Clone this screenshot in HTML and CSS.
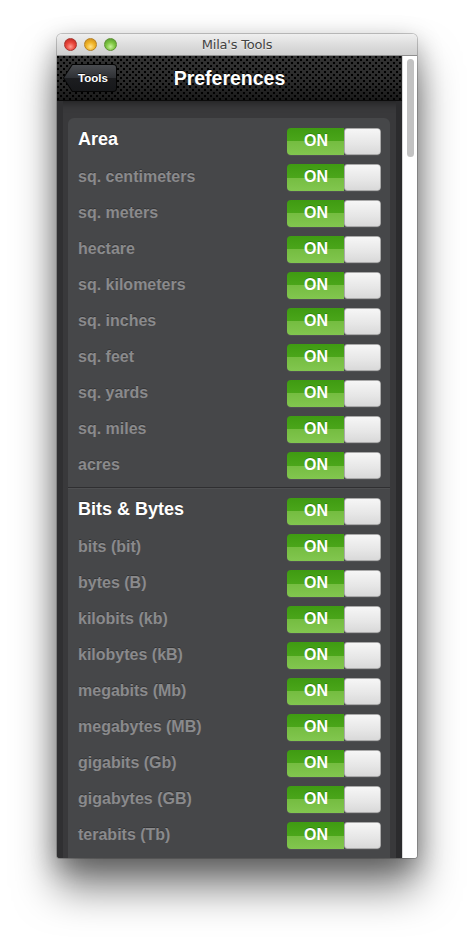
FILE: index.html
```html
<!DOCTYPE html>
<html>
<head>
<meta charset="utf-8">
<link rel="stylesheet" href="styles.css">
</head>
<body>
<div class="stage">
  <div class="window">
    <div class="titlebar">
      <div class="lights">
        <span class="light red"></span>
        <span class="light yellow"></span>
        <span class="light green"></span>
      </div>
      <div class="wtitle">Mila's Tools</div>
    </div>
    <div class="main">
      <div class="app">
        <div class="nav">
          <div class="nav-left">
            <div class="back"><div class="back-inner">Tools</div></div>
          </div>
          <div class="nav-title">Preferences</div>
          <div class="nav-right"></div>
        </div>
        <div class="content">
          <div class="panel">
            <div class="section">
              <div class="row head"><span class="label">Area</span><span class="toggle"><span class="on">ON</span><span class="knob"></span></span></div>
              <div class="row"><span class="label">sq. centimeters</span><span class="toggle"><span class="on">ON</span><span class="knob"></span></span></div>
              <div class="row"><span class="label">sq. meters</span><span class="toggle"><span class="on">ON</span><span class="knob"></span></span></div>
              <div class="row"><span class="label">hectare</span><span class="toggle"><span class="on">ON</span><span class="knob"></span></span></div>
              <div class="row"><span class="label">sq. kilometers</span><span class="toggle"><span class="on">ON</span><span class="knob"></span></span></div>
              <div class="row"><span class="label">sq. inches</span><span class="toggle"><span class="on">ON</span><span class="knob"></span></span></div>
              <div class="row"><span class="label">sq. feet</span><span class="toggle"><span class="on">ON</span><span class="knob"></span></span></div>
              <div class="row"><span class="label">sq. yards</span><span class="toggle"><span class="on">ON</span><span class="knob"></span></span></div>
              <div class="row"><span class="label">sq. miles</span><span class="toggle"><span class="on">ON</span><span class="knob"></span></span></div>
              <div class="row"><span class="label">acres</span><span class="toggle"><span class="on">ON</span><span class="knob"></span></span></div>
            </div>
            <div class="section">
              <div class="row head"><span class="label">Bits &amp; Bytes</span><span class="toggle"><span class="on">ON</span><span class="knob"></span></span></div>
              <div class="row"><span class="label">bits (bit)</span><span class="toggle"><span class="on">ON</span><span class="knob"></span></span></div>
              <div class="row"><span class="label">bytes (B)</span><span class="toggle"><span class="on">ON</span><span class="knob"></span></span></div>
              <div class="row"><span class="label">kilobits (kb)</span><span class="toggle"><span class="on">ON</span><span class="knob"></span></span></div>
              <div class="row"><span class="label">kilobytes (kB)</span><span class="toggle"><span class="on">ON</span><span class="knob"></span></span></div>
              <div class="row"><span class="label">megabits (Mb)</span><span class="toggle"><span class="on">ON</span><span class="knob"></span></span></div>
              <div class="row"><span class="label">megabytes (MB)</span><span class="toggle"><span class="on">ON</span><span class="knob"></span></span></div>
              <div class="row"><span class="label">gigabits (Gb)</span><span class="toggle"><span class="on">ON</span><span class="knob"></span></span></div>
              <div class="row"><span class="label">gigabytes (GB)</span><span class="toggle"><span class="on">ON</span><span class="knob"></span></span></div>
              <div class="row"><span class="label">terabits (Tb)</span><span class="toggle"><span class="on">ON</span><span class="knob"></span></span></div>
              <div class="row"><span class="label">terabytes (TB)</span><span class="toggle"><span class="on">ON</span><span class="knob"></span></span></div>
            </div>
          </div>
        </div>
      </div>
      <div class="scroll"><div class="thumb"></div></div>
    </div>
  </div>
</div>
</body>
</html>
```
FILE: styles.css
```css
html, body {
  margin: 0;
  padding: 0;
  background: #ffffff;
}
.stage {
  padding: 34px 0 0 57px;
  height: 937px;
  box-sizing: border-box;
  overflow: hidden;
}
.window {
  width: 360px;
  height: 824px;
  display: flex;
  flex-direction: column;
  border-radius: 5px 5px 3px 3px;
  overflow: hidden;
  box-shadow: 0 30px 42px rgba(0,0,0,0.5), 0 8px 26px rgba(0,0,0,0.3), 0 0 0 1px rgba(0,0,0,0.2);
  font-family: "Liberation Sans", Arial, sans-serif;
}
.titlebar {
  height: 22px;
  flex: none;
  display: grid;
  grid-template-columns: 1fr auto 1fr;
  align-items: center;
  background: linear-gradient(#efefef, #dadada 60%, #cfcfcf);
  box-sizing: border-box;
  border-bottom: 1px solid #8f8f8f;
}
.lights {
  display: flex;
  gap: 7px;
  padding-left: 7px;
}
.light {
  width: 13px;
  height: 13px;
  border-radius: 50%;
  box-sizing: border-box;
}
.red {
  background: radial-gradient(circle at 50% 70%, #ff9a8e 0, #e9463c 45%, #b9211a 100%);
  border: 1px solid #a5352e;
}
.yellow {
  background: radial-gradient(circle at 50% 70%, #ffe28a 0, #f0b427 45%, #c5861a 100%);
  border: 1px solid #b58124;
}
.green {
  background: radial-gradient(circle at 50% 70%, #c6f09a 0, #7fc642 45%, #4c912c 100%);
  border: 1px solid #5f9134;
}
.wtitle {
  font-family: "DejaVu Sans", "Liberation Sans", sans-serif;
  font-size: 13px;
  color: #434343;
  letter-spacing: -0.2px;
  text-shadow: 0 1px 0 rgba(255,255,255,0.6);
}
.main {
  flex: 1;
  display: flex;
  min-height: 0;
}
.app {
  width: 345px;
  flex: none;
  display: flex;
  flex-direction: column;
  background: #38383a;
}
.nav {
  height: 45px;
  flex: none;
  display: grid;
  grid-template-columns: 1fr auto 1fr;
  align-items: center;
  background:
    radial-gradient(circle, #000 1px, transparent 1.6px) 1px 1px / 6px 6px,
    radial-gradient(circle, #000 1px, transparent 1.6px) 4px 4px / 6px 6px,
    linear-gradient(#333333, #2a2a2a 60%, #1a1a1a);
  box-sizing: border-box;
  border-bottom: 1px solid #0b0b0b;
}
.nav-left {
  padding-left: 6px;
  display: flex;
}
.back {
  width: 54px;
  height: 28px;
  background: #050505;
  clip-path: polygon(0 50%, 9px 0, 100% 0, 100% 100%, 9px 100%);
  border-radius: 0 4px 4px 0;
  padding: 1px;
  box-sizing: border-box;
}
.back-inner {
  height: 100%;
  clip-path: polygon(0 50%, 8.6px 0, 100% 0, 100% 100%, 8.6px 100%);
  border-radius: 0 3px 3px 0;
  background: linear-gradient(#4a4c50, #2e3034 50%, #1c1d20 51%, #17181a);
  color: #fff;
  font-weight: bold;
  font-size: 11.5px;
  display: flex;
  align-items: center;
  justify-content: center;
  padding-left: 6px;
  box-sizing: border-box;
  text-shadow: 0 -1px 0 rgba(0,0,0,0.7);
}
.nav-title {
  color: #fff;
  font-weight: bold;
  font-size: 19.5px;
  text-shadow: 0 -1px 0 rgba(0,0,0,0.8);
}
.content {
  flex: 1;
  overflow: hidden;
  padding: 17px 12px 0 11px;
  background: #39393b;
  box-shadow: inset 6px 0 0 #303032, inset -6px 0 0 #2b2b2d, inset 0 6px 8px -4px rgba(0,0,0,0.45);
}
.panel {
  width: 322px;
  background: #464749;
  border-radius: 6px;
  box-shadow: 0 1px 0 rgba(255,255,255,0.04);
}
.section {
  padding: 5px 0 4px;
}
.section + .section {
  border-top: 1px solid #2f2f31;
  box-shadow: inset 0 1px 0 rgba(255,255,255,0.05);
}
.row {
  height: 36px;
  display: flex;
  align-items: center;
  justify-content: space-between;
  padding: 0 9px 0 10px;
}
.label {
  font-weight: bold;
  font-size: 16px;
  color: #8a8a8c;
  text-shadow: 0 -1px 0 rgba(0,0,0,0.25);
}
.head .label {
  color: #ffffff;
  font-size: 18px;
  position: relative;
  top: -2px;
}
.toggle {
  width: 94px;
  height: 27px;
  display: flex;
  border-radius: 4px;
  overflow: hidden;
  box-shadow: 0 1px 0 rgba(255,255,255,0.06);
}
.on {
  flex: 0 0 56px;
  display: flex;
  align-items: center;
  justify-content: center;
  color: #fff;
  font-weight: bold;
  font-size: 16px;
  background: linear-gradient(#3f9b12, #4ba61a 50%, #75bd41 50%, #82c64f);
  text-shadow: 0 -1px 0 rgba(0,80,0,0.35);
  padding-left: 1px;
}
.knob {
  flex: 1;
  background: linear-gradient(#f6f6f6, #e6e6e6 60%, #d9d9d9);
  border: 1px solid #a9a9a9;
  border-radius: 3px;
  box-sizing: border-box;
}
.scroll {
  flex: 1;
  background: #ffffff;
  padding: 3px 4px 0 4px;
  border-left: 1px solid #d8d8d8;
}
.thumb {
  width: 7px;
  height: 98px;
  border-radius: 4px;
  background: #c2c2c2;
}
```
